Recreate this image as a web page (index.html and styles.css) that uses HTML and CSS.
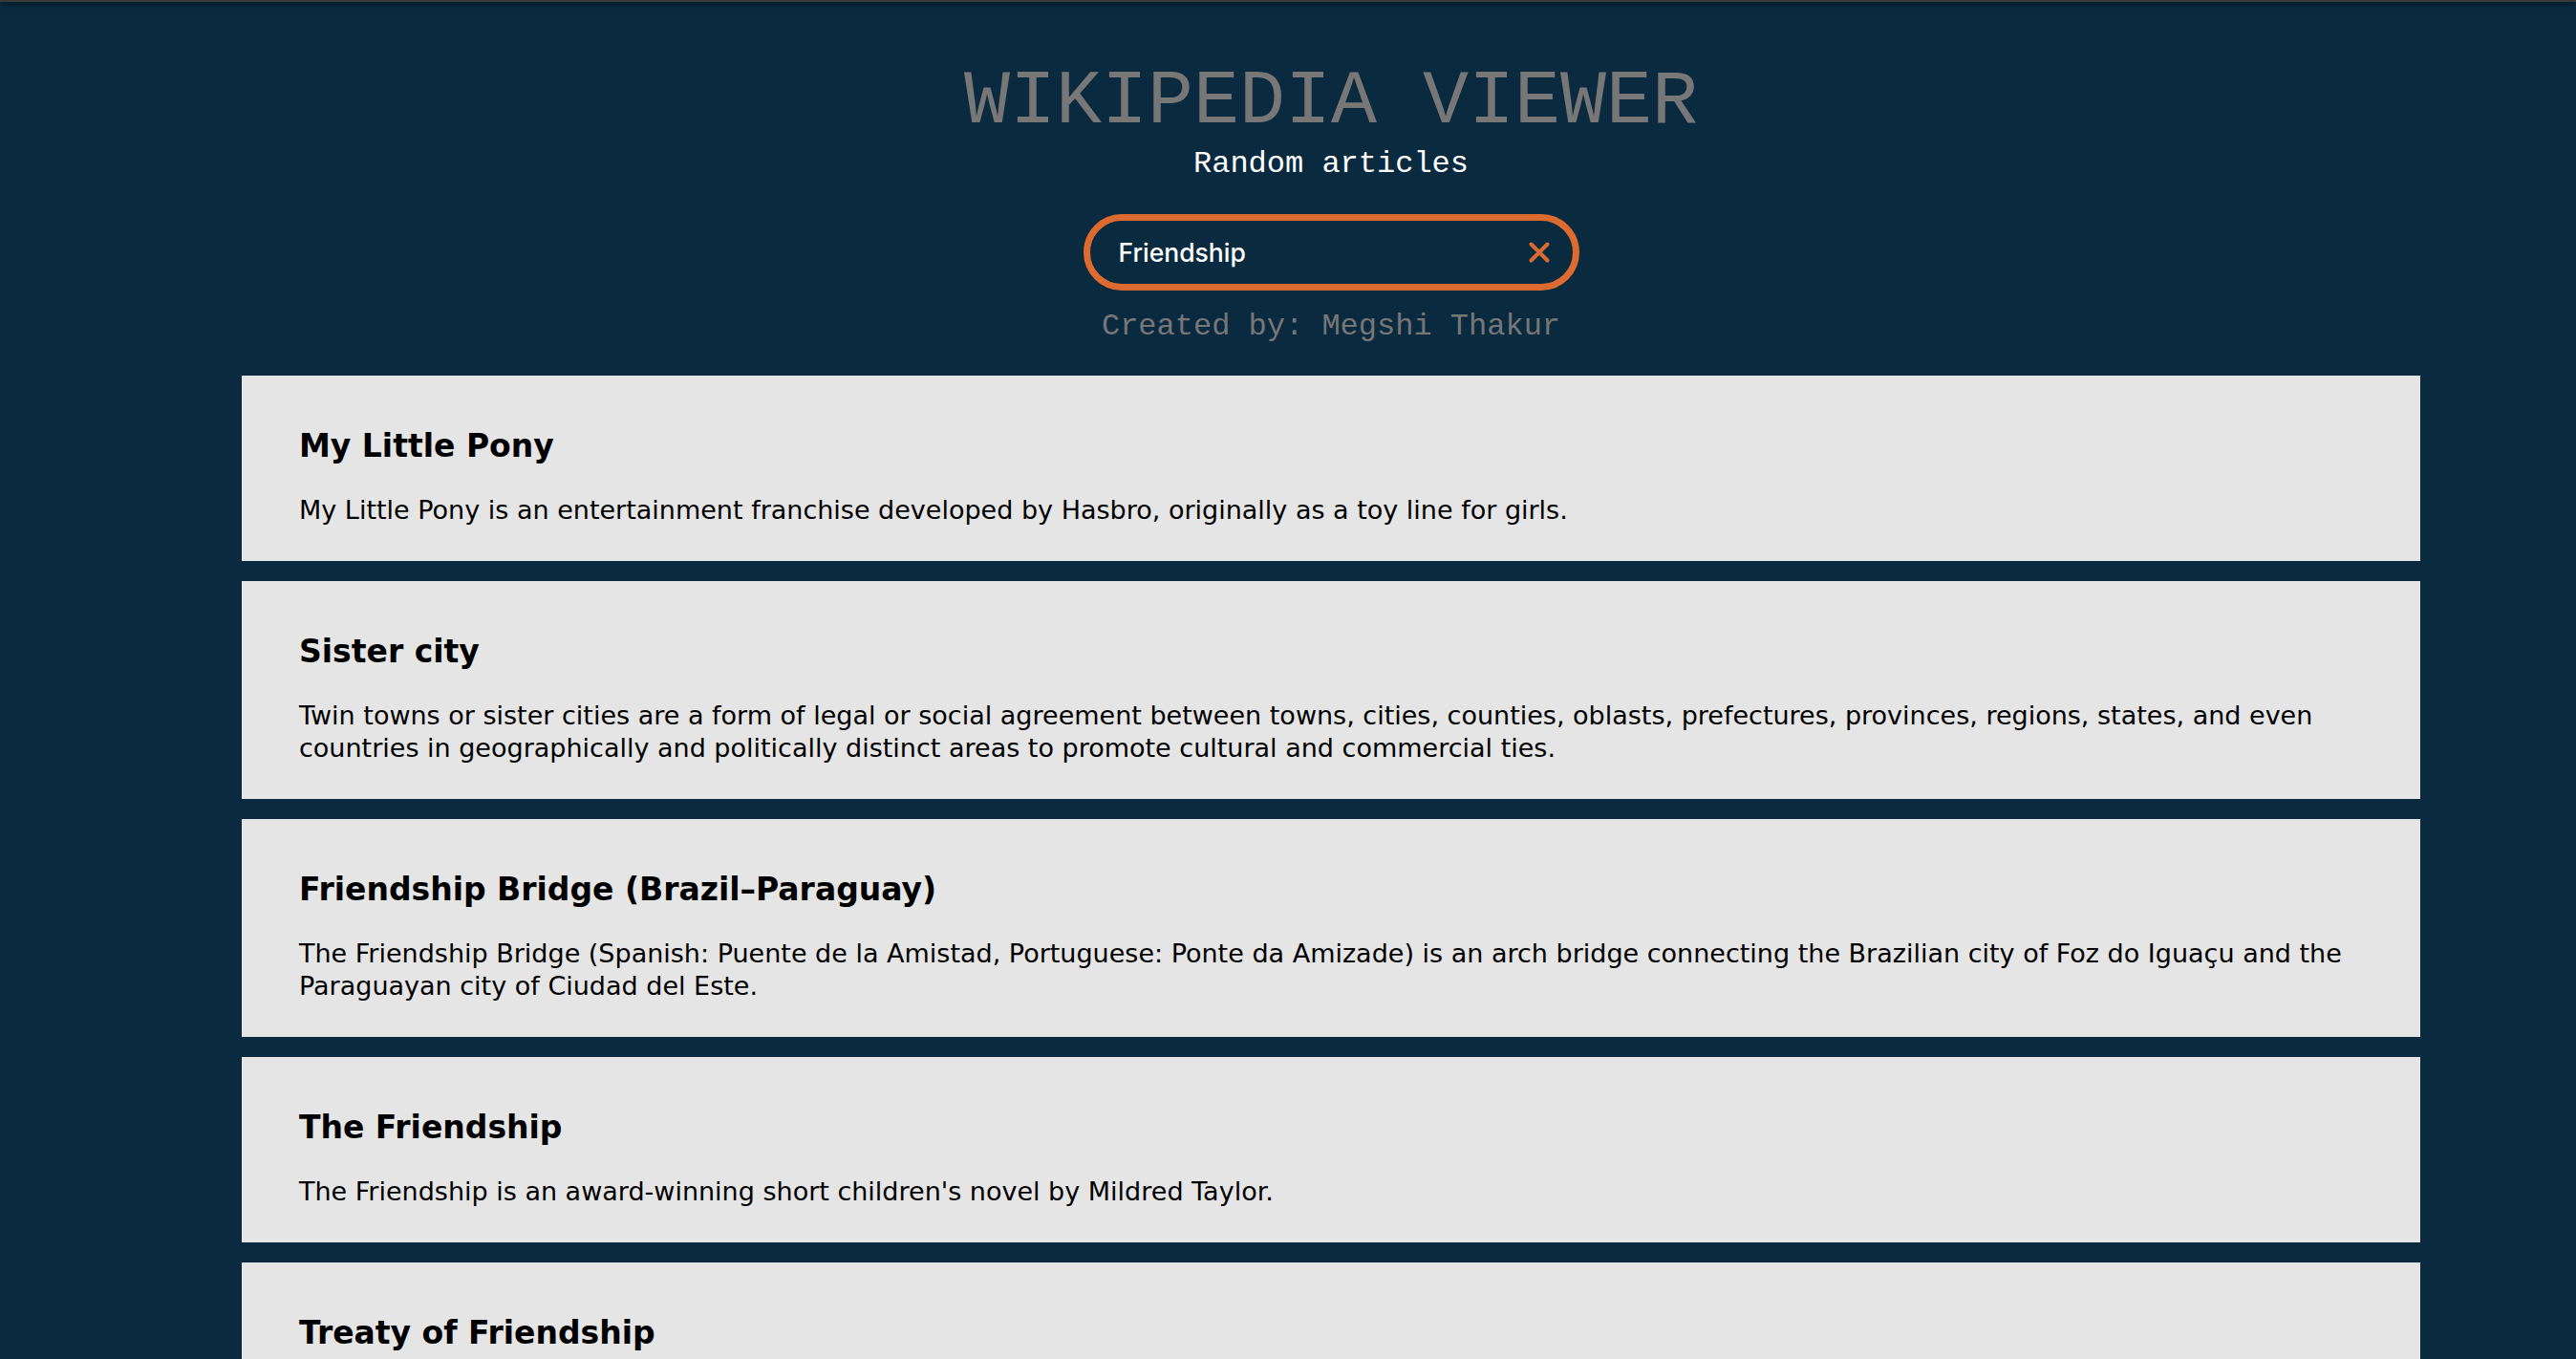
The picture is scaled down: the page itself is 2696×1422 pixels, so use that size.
FILE: index.html
```html
<!DOCTYPE html>
<html lang="en">
<head>
<meta charset="utf-8">
<title>Wikipedia Viewer</title>
<link rel="stylesheet" href="styles.css">
</head>
<body>
<div class="topbar"></div>
<div class="page">
  <header class="header">
    <h1 class="title">WIKIPEDIA VIEWER</h1>
    <a class="random">Random articles</a>
    <div class="search">
      <input class="search-input" type="text" value="Friendship">
      <button class="clear" type="button" aria-label="Clear">
        <svg width="26" height="26" viewBox="0 0 26 26"><path d="M4.5 4.5 L21.5 21.5 M21.5 4.5 L4.5 21.5" stroke="#dd6b2f" stroke-width="4" stroke-linecap="round" fill="none"/></svg>
      </button>
    </div>
    <p class="credit">Created by: Megshi Thakur</p>
  </header>
  <main class="results">
    <article class="card">
      <h2 class="card-title">My Little Pony</h2>
      <p class="card-text">My Little Pony is an entertainment franchise developed by Hasbro, originally as a toy line for girls.</p>
    </article>
    <article class="card">
      <h2 class="card-title">Sister city</h2>
      <p class="card-text">Twin towns or sister cities are a form of legal or social agreement between towns, cities, counties, oblasts, prefectures, provinces, regions, states, and even countries in geographically and politically distinct areas to promote cultural and commercial ties.</p>
    </article>
    <article class="card">
      <h2 class="card-title">Friendship Bridge (Brazil–Paraguay)</h2>
      <p class="card-text">The Friendship Bridge (Spanish: Puente de la Amistad, Portuguese: Ponte da Amizade) is an arch bridge connecting the Brazilian city of Foz do Iguaçu and the Paraguayan city of Ciudad del Este.</p>
    </article>
    <article class="card">
      <h2 class="card-title">The Friendship</h2>
      <p class="card-text">The Friendship is an award-winning short children's novel by Mildred Taylor.</p>
    </article>
    <article class="card">
      <h2 class="card-title">Treaty of Friendship</h2>
      <p class="card-text">A treaty of friendship is an agreement between two or more states to establish peaceful relations and cooperation.</p>
    </article>
  </main>
</div>
</body>
</html>
```

FILE: styles.css
```css
html, body {
  margin: 0;
  padding: 0;
  background: #0a2a3f;
}

body {
  font-family: "DejaVu Sans", sans-serif;
}

.topbar {
  height: 2px;
  background: #3a3a3a;
  box-shadow: 0 2px 5px rgba(0, 0, 0, 0.7);
  position: relative;
  z-index: 1;
}

.page {
  padding-left: 90px;
}

.header {
  display: flex;
  flex-direction: column;
  align-items: center;
}

.title {
  margin: 65px 0 0;
  font-family: "Liberation Mono", "Courier New", monospace;
  font-weight: normal;
  font-size: 80px;
  line-height: 80px;
  color: #777777;
}

.random {
  margin-top: 7px;
  font-family: "Liberation Mono", "Courier New", monospace;
  font-size: 32px;
  line-height: 36px;
  color: #ffffff;
}

.search {
  margin-top: 34px;
  width: 519px;
  height: 80px;
  box-sizing: border-box;
  border: 7px solid #dd6b2f;
  border-radius: 40px;
  display: flex;
  align-items: center;
  padding: 0 22px 0 30px;
}

.search-input {
  flex: 1;
  min-width: 0;
  background: transparent;
  border: none;
  outline: none;
  padding: 0;
  font-family: Inter, "Open Sans", sans-serif;
  font-weight: 500;
  font-size: 26.5px;
  color: #ffffff;
}

.clear {
  background: none;
  border: none;
  padding: 0;
  width: 26px;
  height: 26px;
  display: flex;
}

.credit {
  margin: 20px 0 0;
  font-family: "Liberation Mono", "Courier New", monospace;
  font-size: 32px;
  line-height: 36px;
  color: #777777;
}

.results {
  margin-top: 33px;
  display: flex;
  flex-direction: column;
  align-items: center;
  gap: 21px;
}

.card {
  width: 2280px;
  box-sizing: border-box;
  background: #e5e5e5;
  padding: 55px 60px 36px;
}

.card-title {
  margin: 0;
  font-weight: bold;
  font-size: 33px;
  line-height: 38px;
  color: #000;
}

.card-text {
  margin: 31px 0 0;
  font-size: 27px;
  line-height: 34px;
  color: #000;
}
```
